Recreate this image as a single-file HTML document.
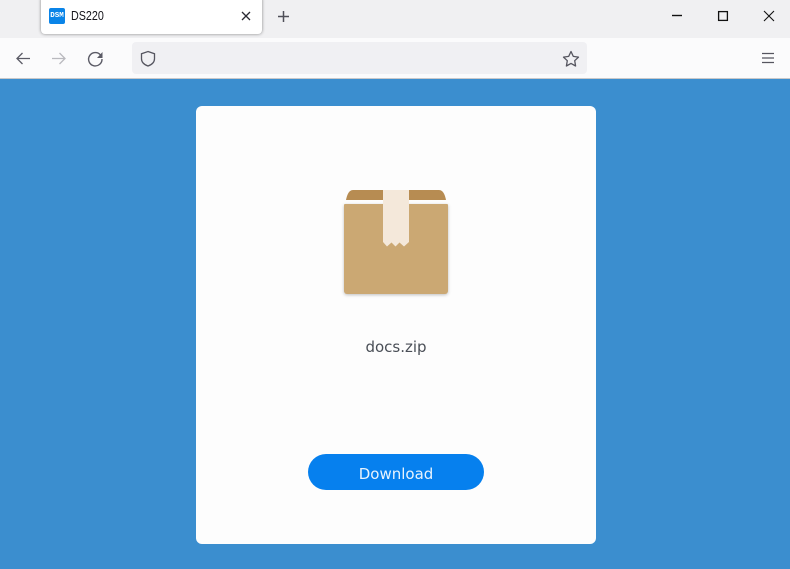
<!DOCTYPE html>
<html>
<head>
<meta charset="utf-8">
<style>
html,body{margin:0;padding:0;width:790px;height:569px;overflow:hidden;background:#3b8ecf;font-family:"DejaVu Sans","Liberation Sans",sans-serif}
.abs{position:absolute}
svg{position:absolute;overflow:visible}
</style>
</head>
<body>
<div class="abs" style="left:0;top:0;width:790px;height:38px;background:#f0f0f2"></div>
<div class="abs" style="left:0;top:38px;width:790px;height:40px;background:#fbfbfc"></div>
<div class="abs" style="left:0;top:78px;width:790px;height:1px;background:#c8c8ca"></div>
<div class="abs" style="left:41px;top:-4px;width:221px;height:38px;background:#fff;border-radius:4px;box-shadow:0 0 3px rgba(0,0,0,.45)"></div>
<div class="abs" style="left:49px;top:8px;width:16px;height:16px;background:#0a84e8;border-radius:2px;color:#fff;font:bold 7.5px/16px 'Liberation Mono',monospace;text-align:center">DSM</div>
<div class="abs" style="left:71px;top:8px;font:12.5px/17px 'Liberation Sans',sans-serif;color:#15141a;transform:scaleX(.86);transform-origin:left center">DS220</div>
<svg style="left:0;top:0" width="790" height="79" fill="none">
<path d="M242 12l8 8M250 12l-8 8" stroke="#2b2a33" stroke-width="1.300"/>
<path d="M283.500 11v11M278 16.500h11" stroke="#4f4f58" stroke-width="1.500"/>
<path d="M672 15.500h10" stroke="#111" stroke-width="1.400"/>
<rect x="718.600" y="11.600" width="8.800" height="8.800" stroke="#111" stroke-width="1.300"/>
<path d="M764 11l10 10M774 11l-10 10" stroke="#111" stroke-width="1.100"/>
<path d="M30 58.500H17M22.500 53l-5.500 5.500 5.500 5.500" stroke="#5b5b66" stroke-width="1.300"/>
<path d="M52 58.500h13M59.500 53l5.500 5.500-5.500 5.500" stroke="#b9b9be" stroke-width="1.300"/>
<path d="M100.500 55a6.700 6.700 0 1 0 1.500 4" stroke="#5b5b66" stroke-width="1.400"/>
<path d="M97 58h5.500v-6z" fill="#5b5b66"/>
<rect x="132" y="42" width="455" height="32" rx="4" fill="#f0f0f3"/>
<path d="M148 51.500l6.500 2.200v5c0 3.700-3 6-6.500 7.300-3.500-1.300-6.500-3.600-6.500-7.300v-5z" stroke="#55555f" stroke-width="1.300"/>
<path d="M571 51.500l2.300 4.900 5.200.7-3.800 3.600.9 5.300-4.600-2.600-4.600 2.600.9-5.300-3.800-3.600 5.200-.7z" stroke="#55555f" stroke-width="1.300" stroke-linejoin="round"/>
<path d="M762 53.500h12M762 58h12M762 62.500h12" stroke="#55555f" stroke-width="1.300"/>
</svg>
<div class="abs" style="left:196px;top:106px;width:400px;height:438px;background:#fdfdfd;border-radius:6px"></div>
<div class="abs" style="left:344px;top:204px;width:104px;height:90px;background:#cba873;border-radius:1px 1px 3px 3px;box-shadow:0 1px 3px rgba(0,0,0,.25)"></div>
<svg style="left:0;top:0" width="790" height="300">
<path d="M346 200c.8-4 2.500-10 7-10h86c4.500 0 6.200 6 7 10z" fill="#b78c52"/>
<path d="M383 190h26v52l-5 4.500-4.500-4-4 4-4-4-4.500 4-4-4.500z" fill="#f4e8da"/>
</svg>
<div class="abs" style="left:196px;top:337px;width:400px;text-align:center;font-size:15px;line-height:20px;color:#4a4f57">docs.zip</div>
<div class="abs" style="left:308px;top:454px;width:176px;height:36px;background:#0680ee;border-radius:18px;color:#e8f3fd;text-align:center;font-size:15px;line-height:40px">Download</div>
</body>
</html>
